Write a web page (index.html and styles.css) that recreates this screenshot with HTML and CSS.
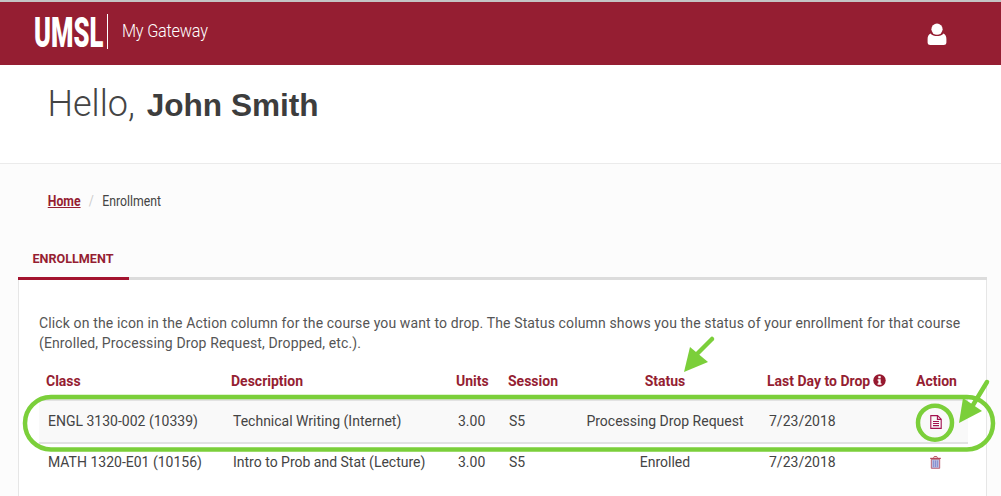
FILE: index.html
```html
<!DOCTYPE html>
<html lang="en">
<head>
<meta charset="utf-8">
<title>Enrollment</title>
<link rel="stylesheet" href="styles.css">
</head>
<body>
<header class="topbar">
  <div class="brand">
    <div class="logo"><span class="logo-text">UMSL</span></div>
    <span class="brand-sep"></span>
    <div class="brand-box"><span class="brand-name">My Gateway</span></div>
  </div>
  <svg class="user" width="20" height="23" viewBox="0 0 20 23"><circle cx="10" cy="6.2" r="5.6" fill="#fff"/><path d="M3.5 10.5 C5 12.6 7.5 13 10 13 S15 12.6 16.5 10.5 C18.6 11.4 19.4 13.5 19.4 16 V19.5 C19.4 21.2 18.2 22 16.8 22 H3.2 C1.8 22 .6 21.2 .6 19.5 V16 C.6 13.5 1.4 11.4 3.5 10.5Z" fill="#fff"/></svg>
</header>
<section class="greeting">
  <h1 class="hello">Hello, <strong class="hello-name">John Smith</strong></h1>
</section>
<main class="content">
  <nav class="crumbs"><a class="crumb-link" href="#">Home</a><span class="crumb-sep">/</span><span>Enrollment</span></nav>
  <div class="tabs"><span class="tab">ENROLLMENT</span></div>
  <div class="panel">
    <p class="intro">Click on the icon in the Action column for the course you want to drop. The Status column shows you the status of your enrollment for that course (Enrolled, Processing Drop Request, Dropped, etc.).</p>
    <table class="courses">
      <colgroup><col class="c1"><col class="c2"><col class="c3"><col class="c4"><col class="c5"><col class="c6"><col class="c7"></colgroup>
      <thead>
        <tr><th>Class</th><th>Description</th><th>Units</th><th>Session</th><th class="center">Status</th><th>Last Day to Drop<svg class="info" width="13" height="13" viewBox="0 0 13 13"><circle cx="6.5" cy="6.5" r="6.2" fill="#96192f"/><rect x="5.3" y="2.1" width="2.4" height="2.2" fill="#fff"/><path d="M4.6 5.3H7.7V9.3H8.5V10.8H4.6V9.3H5.4V6.8H4.6Z" fill="#fff"/></svg></th><th>Action</th></tr>
      </thead>
      <tbody>
        <tr class="active"><td>ENGL 3130-002 (10339)</td><td>Technical Writing (Internet)</td><td>3.00</td><td class="tight">S5</td><td class="center">Processing Drop Request</td><td>7/23/2018</td><td class="icon-cell"><svg width="12" height="14" viewBox="0 0 12 14" fill="none" stroke="#a3114f" stroke-width="1.1"><path d="M.8.6H7.6L11.2 4.2V13.4H.8Z"/><path d="M7.4.8V4.4H11"/><path d="M3 6.5H9M3 8.5H9M3 10.6H9" stroke-width="1.2"/></svg></td></tr>
        <tr class="plain"><td>MATH 1320-E01 (10156)</td><td>Intro to Prob and Stat (Lecture)</td><td>3.00</td><td class="tight">S5</td><td class="center">Enrolled</td><td>7/23/2018</td><td class="icon-cell trash-cell"><svg width="11" height="13" viewBox="0 0 11 13"><path d="M3.6 1.8 4.2.6H6.8L7.4 1.8" fill="none" stroke="#b5485a"/><rect x=".2" y="1.8" width="10.6" height="1.2" fill="#b5485a"/><path d="M1.3 3.2H9.7V12.3H1.3Z" fill="#b9bde0" stroke="#b5485a" stroke-width=".8"/><path d="M3.6 4.5V11M5.5 4.5V11M7.4 4.5V11" stroke="#7f8bcf" stroke-width=".9"/></svg></td></tr>
      </tbody>
    </table>
  </div>
</main>
<svg class="marks" width="1001" height="496" viewBox="0 0 1001 496" fill="none">
  <rect x="25" y="397" width="968" height="52.5" rx="26" stroke="#7bcf3a" stroke-width="4.5"/>
  <circle cx="935" cy="422.7" r="17" stroke="#7bcf3a" stroke-width="4.5"/>
  <path d="M987 382 970 410" stroke="#7bcf3a" stroke-width="4.5" stroke-linecap="round"/>
  <path d="M959 423 963 398 982 411Z" fill="#7bcf3a"/>
  <path d="M712 339 693 358" stroke="#7bcf3a" stroke-width="4.5" stroke-linecap="round"/>
  <path d="M684 372 690 347 708 362Z" fill="#7bcf3a"/>
</svg>
</body>
</html>
```
FILE: styles.css
```css
* { box-sizing: border-box; }
html, body { margin: 0; height: 496px; overflow: hidden; }
body { position: relative; background: #fcfcfc; font-family: Roboto, sans-serif; color: #444; }
.topbar {
  height: 65px;
  border-top: 2px solid #c4c4c4;
  background: #951e32;
  display: flex;
  align-items: center;
  justify-content: space-between;
  padding: 0 54px 0 34px;
}
.brand { display: flex; align-items: center; }
.logo { width: 70px; height: 40px; margin-top: -4px; }
.logo-text { display: inline-block; font-weight: 900; font-size: 43px; line-height: 40px; color: #fff; transform: scaleX(.595); transform-origin: 0 50%; }
.brand-sep { width: 1px; height: 35px; background: #fff; margin: -4px 14px 0 3px; }
.brand-box { width: 95px; margin-top: -6px; white-space: nowrap; }
.brand-name { display: inline-block; color: #fff; font-size: 18px; font-weight: 300; letter-spacing: -.25px; transform: scaleX(.905); transform-origin: 0 50%; }
.user { margin-top: 2px; }
.greeting { height: 99px; background: #fff; border-bottom: 1px solid #ebebeb; padding: 17px 47.5px 0; }
.hello { margin: 0; font-family: Roboto, sans-serif; font-weight: 300; font-size: 36px; line-height: 44px; color: #444; }
.hello-name { font-family: "Liberation Sans", Arial, sans-serif; font-weight: 700; font-size: 31.6px; margin-left: 3px; color: #3d3d3d; }
.content { padding: 27px 14px 0 18px; }
.crumbs { height: 20px; padding-left: 34px; font-size: 14px; line-height: 20px; color: #444; transform: scaleX(.875); transform-origin: 0 0; width: 300px; }
.crumb-link { color: #951e32; font-weight: 700; }
.crumb-sep { color: #ccc; margin: 0 9.5px; }
.tabs { margin-top: 38px; height: 31px; border-bottom: 3px solid #dcdcdc; }
.tab { display: block; width: 111px; height: 31px; border-bottom: 3px solid #a3142f; padding: 1px 0 0 14.5px; font-size: 12.6px; font-weight: 700; line-height: 18px; color: #951e32; }
.panel { background: #fff; border-left: 1px solid #e6e6e6; border-right: 1px solid #e6e6e6; height: 219px; padding: 33px 19px 0 20px; }
.intro { margin: 0; font-size: 14px; line-height: 20px; letter-spacing: .13px; color: #555; }
.courses { margin-top: 9px; width: 929px; table-layout: fixed; border-collapse: collapse; font-size: 14px; }
.c1 { width: 185px; } .c2 { width: 225px; } .c3 { width: 52px; } .c4 { width: 69px; } .c5 { width: 190px; } .c6 { width: 149px; } .c7 { width: 59px; }
.courses th { height: 38px; padding: 0 0 0 7px; text-align: left; font-weight: 700; color: #951e32; white-space: nowrap; }
.courses td { height: 41px; padding: 0 0 0 9px; color: #444; white-space: nowrap; }
.courses .active td { height: 43px; padding-bottom: 2px; }
.courses .plain td { padding-bottom: 5px; }
.courses th.center, .courses td.center { padding-left: 0; text-align: center; }
.courses td.tight { padding-left: 8px; }
.courses td.icon-cell { padding-left: 21px; }
.courses .active td.icon-cell { padding-bottom: 1px; padding-top: 1px; }
.courses .plain td.icon-cell { padding-bottom: 3px; }
.icon-cell svg { display: block; }
.active { background: #f9f9f9; border-top: 2px solid #e2e2e2; border-bottom: 2px solid #e2e2e2; }
.info { vertical-align: -1px; margin-left: 3px; }
.marks { position: absolute; left: 0; top: 0; pointer-events: none; }
```
